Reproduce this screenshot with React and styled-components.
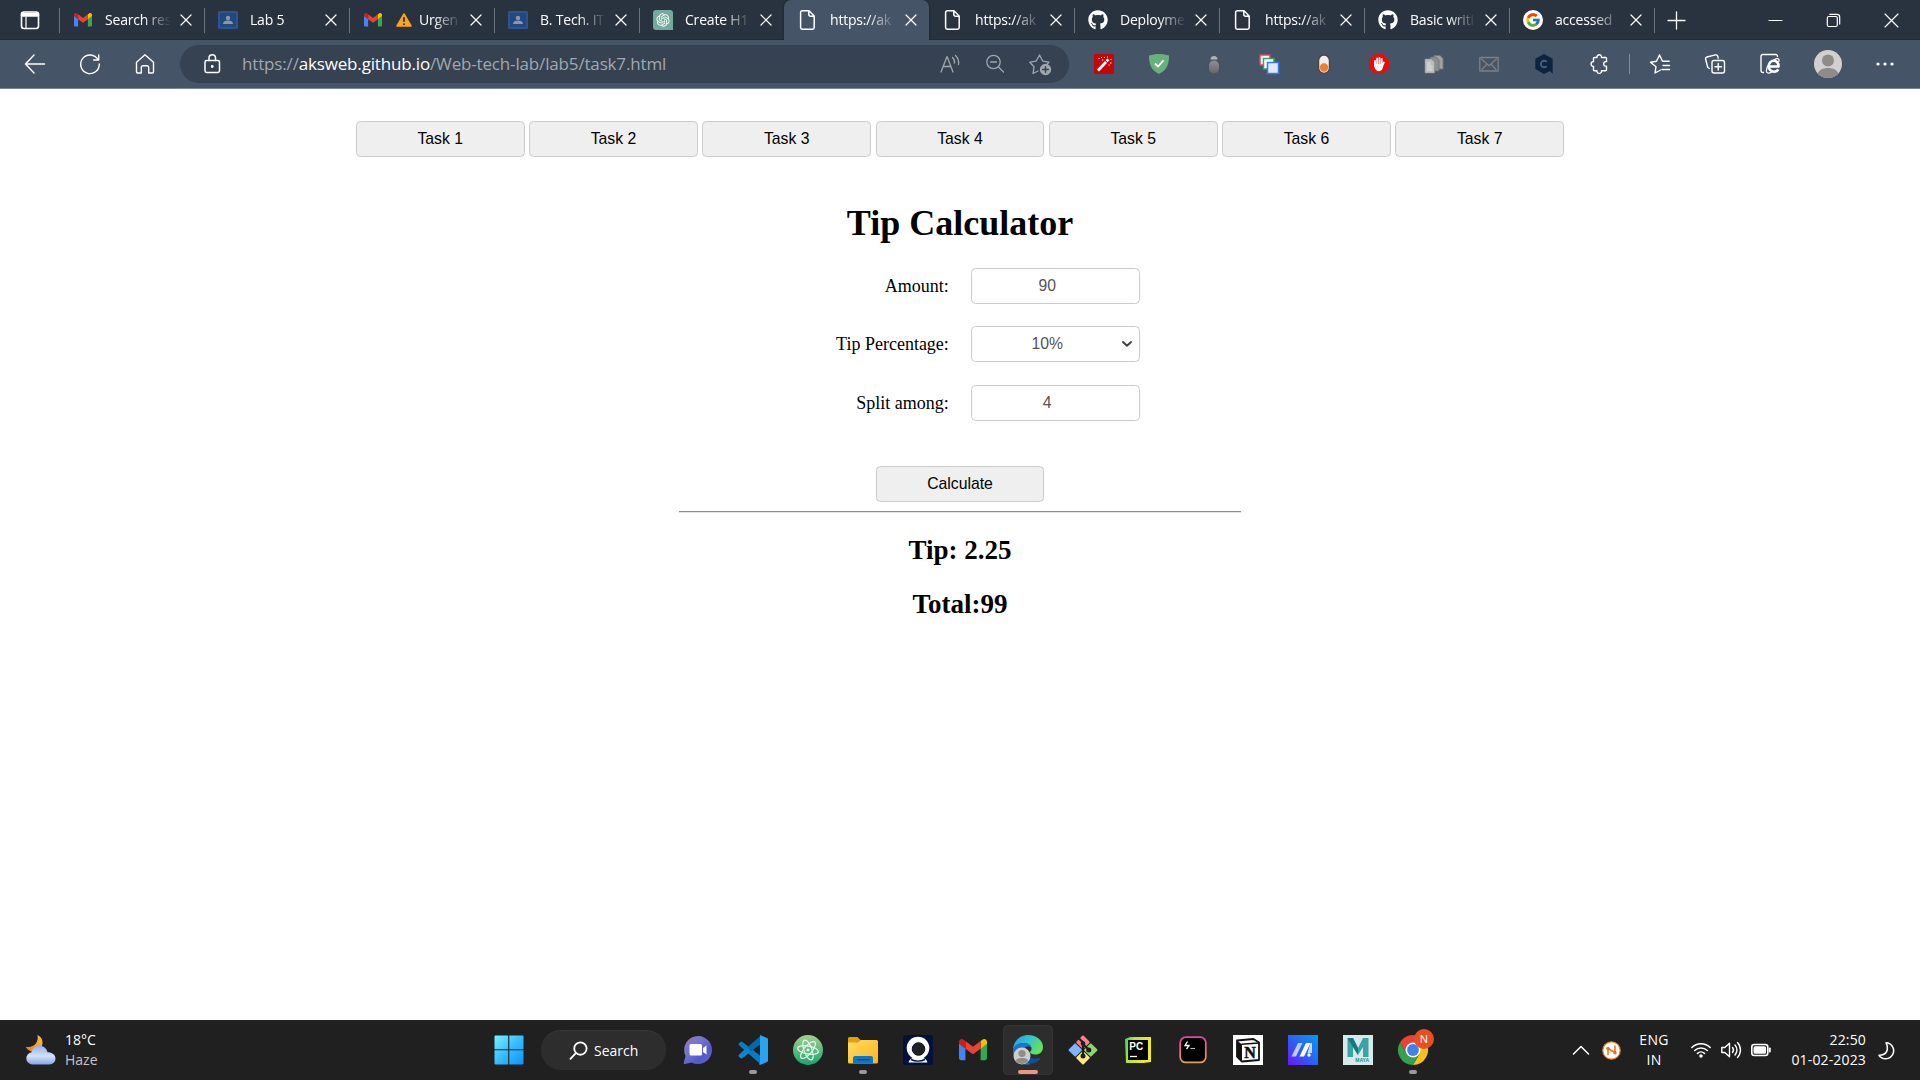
import React from "react";
import styled, { createGlobalStyle, css } from "styled-components";
import { FcGoogle } from "react-icons/fc";
import { FaGithub } from "react-icons/fa";
import { RiOpenaiFill } from "react-icons/ri";

const ui = `"Open Sans", "Noto Sans", sans-serif`;
const arial = `"Liberation Sans", Arial, sans-serif`;
const times = `"Liberation Serif", "Times New Roman", serif`;

const GlobalStyle = createGlobalStyle`
  *, *::before, *::after { box-sizing: border-box; }
  body { margin: 0; background: #fff; overflow: hidden; }
  svg { display: block; flex: none; overflow: visible; }
`;

const Screen = styled.div`
  width: 1920px;
  height: 1080px;
  display: flex;
  flex-direction: column;
  background: #fff;
`;

/* ---------- tab strip ---------- */

const TabStrip = styled.header`
  height: 40px;
  flex: none;
  display: flex;
  background: #29333f;
  box-shadow: inset 0 -1px 0 #222b36;
  font-family: ${ui};
`;

const StripButton = styled.div`
  width: ${(p) => p.$width}px;
  flex: none;
  display: flex;
  align-items: center;
  justify-content: center;
  color: #fff;
`;

const TabItem = styled.div`
  width: ${(p) => p.$width || 145}px;
  flex: none;
  height: 40px;
  display: flex;
  align-items: center;
  padding: 0 5px 0 14px;
  color: #fff;
  position: relative;
  ${(p) =>
    p.$divider &&
    css`
      &::before {
        content: "";
        position: absolute;
        left: 0;
        top: 8px;
        width: 1px;
        height: 25px;
        background: #6b737d;
      }
    `}
  ${(p) =>
    p.$active &&
    css`
      background: #465468;
      border-radius: 7px 7px 0 0;
      box-shadow: 0 0 3px rgba(0, 0, 0, 0.4);
      clip-path: inset(0 -4px 0 -4px);
    `}
`;

const TabIcon = styled.div`
  width: 20px;
  height: 20px;
  margin-right: 12px;
  display: flex;
  align-items: center;
  justify-content: center;
`;

const TabTitle = styled.div`
  width: 68px;
  height: 24px;
  display: flex;
  align-items: center;
  padding-bottom: 1px;
  white-space: pre;
  font-size: 14px;
  letter-spacing: -0.2px;
  mask-image: linear-gradient(90deg, #000 56%, transparent 97%);
`;

const TabClose = styled.div`
  margin-left: auto;
  width: 26px;
  display: flex;
  justify-content: center;
`;

const WindowControls = styled.div`
  margin-left: auto;
  display: flex;
`;

/* ---------- toolbar ---------- */

const Toolbar = styled.nav`
  height: 49px;
  flex: none;
  display: flex;
  align-items: center;
  background: #465468;
  border-bottom: 1px solid #7c8796;
  padding: 0 8px 0 7px;
  color: #fff;
  font-family: ${ui};
`;

const ToolSlot = styled.div`
  width: ${(p) => p.$width || 55}px;
  display: flex;
  align-items: center;
  justify-content: center;
`;

const AddressBar = styled.div`
  width: 889px;
  height: 38px;
  margin-left: 8px;
  margin-right: 7px;
  border-radius: 19px;
  background: #364152;
  display: flex;
  align-items: center;
  padding: 0 7px 0 22px;
`;

const Url = styled.div`
  margin-left: 20px;
  padding-bottom: 2px;
  flex: 1;
  white-space: nowrap;
  font-size: 17px;
  letter-spacing: -0.16px;
  color: #a2a8b0;
  b {
    font-weight: 400;
    color: #fff;
  }
`;

const ToolDivider = styled.div`
  width: 1px;
  height: 20px;
  margin: 0 2px 0 3px;
  background: #838d9b;
`;

const Avatar = styled.div`
  width: 28px;
  height: 28px;
  border-radius: 50%;
  overflow: hidden;
  background: #d2d0ce;
`;

/* ---------- page ---------- */

const Page = styled.main`
  flex: 1;
  display: flex;
  flex-direction: column;
  align-items: center;
  padding-top: 32px;
  color: #000;
  font-family: ${times};
`;

const TaskNav = styled.div`
  display: flex;
  gap: 4.5px;
`;

const Button = styled.button`
  width: 168.75px;
  height: 36px;
  padding: 0;
  border: 1px solid #ccc;
  border-radius: 4.5px;
  background: #efefef;
  color: #000;
  font: 15.75px ${arial};
`;

const Title = styled.h1`
  margin: 45px 0 0;
  font-size: 36px;
  line-height: 42px;
  font-weight: 700;
`;

const Form = styled.form`
  display: grid;
  grid-template-columns: 270px 168.75px;
  column-gap: 22.5px;
  row-gap: 22.5px;
  margin: 23.8px 0 45.2px;
  padding-right: 101px;
  align-items: center;
`;

const Label = styled.label`
  text-align: right;
  font-size: 18px;
  line-height: 20px;
  padding-bottom: 0.6px;
`;

const Field = styled.div`
  height: 36px;
  display: flex;
  align-items: center;
  justify-content: center;
  border: 1px solid #ccc;
  border-radius: 4.5px;
  background: #fff;
  color: #555;
  font: 15.75px ${arial};
`;

const FieldValue = styled.span`
  flex: 1;
  text-align: center;
`;

const FieldEnd = styled.span`
  width: 17px;
  display: flex;
`;

const Rule = styled.hr`
  width: 562.5px;
  height: 2px;
  margin: 9px 0 0;
  border: 0;
  border-top: 1px solid #8c8c8c;
  border-bottom: 1px solid #e6e6e6;
`;

const Result = styled.h2`
  margin: ${(p) => p.$top}px 0 0;
  font-size: 27px;
  line-height: 31px;
  font-weight: 700;
`;

/* ---------- taskbar ---------- */

const Taskbar = styled.footer`
  height: 60px;
  flex: none;
  display: flex;
  align-items: center;
  background: #202020;
  color: #fff;
  font-family: ${ui};
  font-size: 14px;
`;

const Weather = styled.div`
  width: 481px;
  padding-left: 25px;
  display: flex;
  align-items: center;
  gap: 9px;
  letter-spacing: -0.1px;
`;

const Lines = styled.div`
  display: flex;
  flex-direction: column;
  align-items: ${(p) => p.$align || "flex-start"};
  line-height: 20px;
  letter-spacing: ${(p) => p.$tracking || 0}px;
  span + span {
    color: ${(p) => p.$second || "#fff"};
  }
`;

const AppSlot = styled.div`
  width: 55px;
  height: 60px;
  display: flex;
  flex-direction: column;
  align-items: center;
  padding-top: 5px;
`;

const AppTile = styled.div`
  width: 50px;
  height: 50px;
  border-radius: 5px;
  display: flex;
  flex-direction: column;
  align-items: center;
  padding-top: 10px;
  gap: 5px;
  ${(p) =>
    p.$active &&
    css`
      background: #2d2d2d;
      box-shadow: inset 0 0 0 1px #353535;
    `}
`;

const Indicator = styled.div`
  width: ${(p) => (p.$active ? 20 : 8)}px;
  height: 4px;
  border-radius: 2px;
  background: ${(p) => (p.$active ? "#ee967d" : "#9a9a9a")};
`;

const SearchPill = styled.div`
  width: 125px;
  height: 40px;
  margin: 0 4px 0 5px;
  border-radius: 20px;
  background: #2d2d2d;
  box-shadow: inset 0 1px 0 #363636;
  display: flex;
  align-items: center;
  padding-left: 28px;
  gap: 6px;
`;

const Tray = styled.div`
  margin-left: auto;
  display: flex;
  align-items: center;
`;

const TraySlot = styled.div`
  width: ${(p) => p.$width}px;
  display: flex;
  justify-content: ${(p) => p.$justify || "center"};
  padding-left: ${(p) => p.$inset || 0}px;
  white-space: nowrap;
`;

/* ---------- drawings ---------- */

const Line = ({ size = 20, w = 1.3, color = "currentColor", children, box = 20 }) => (
  <svg width={size} height={size} viewBox={`0 0 ${box} ${box}`} fill="none" stroke={color} strokeWidth={w} strokeLinecap="round" strokeLinejoin="round">
    {children}
  </svg>
);

const GmailIcon = ({ width = 18 }) => (
  <svg width={width} height={width * 0.76} viewBox="0 0 28 21">
    <path d="M0 4v15.200a1.800 1.800 0 0 0 1.800 1.800H6.400V9z" fill="#4285f4" />
    <path d="M21.600 21h4.600a1.800 1.800 0 0 0 1.800-1.800V4l-6.400 5z" fill="#34a853" />
    <path d="M21.600 1.900V9.500L28 4.700V2.700C28 .3 25.200-.9 23.400.5z" fill="#fbbc04" />
    <path d="M6.400 9.500V1.900L14 7.600l7.600-5.700v7.600L14 15.200z" fill="#ea4335" />
    <path d="M0 2.700v2l6.400 4.800V1.900L4.600.5C2.800-.9 0 .3 0 2.700z" fill="#c5221f" />
  </svg>
);

const ClassroomIcon = () => (
  <svg width="20" height="18" viewBox="0 0 20 18">
    <rect width="20" height="18" rx="1.500" fill="#2f5293" />
    <rect x="2" y="2" width="16" height="14" fill="#23477f" />
    <circle cx="10" cy="7" r="2.200" fill="#8e979f" />
    <path d="M5 13c0-2.500 2-3.500 5-3.500s5 1 5 3.500z" fill="#8e979f" />
  </svg>
);

const ChatGptIcon = () => (
  <svg width="20" height="20" viewBox="0 0 20 20">
    <path d="M3 0h14a3 3 0 0 1 3 3v17H3a3 3 0 0 1-3-3V3a3 3 0 0 1 3-3z" fill="#74aa9c" />
    <RiOpenaiFill x="2" y="2" width="16" height="16" size={16} color="#fff" />
  </svg>
);

const FileIcon = () => (
  <Line w={1.500}>
    <path d="M4.300.8h6.700l5.200 5.200v11.500a1.700 1.700 0 0 1-1.700 1.700H4.300a1.700 1.700 0 0 1-1.700-1.700v-15A1.700 1.700 0 0 1 4.300.8zM10.800 1v3.500a1.700 1.700 0 0 0 1.700 1.700H16" />
  </Line>
);

const WarnBox = styled.span`
  margin-left: 1px;
  margin-right: 7px;
`;

const WarningIcon = () => (
  <WarnBox>
    <svg width="16" height="14" viewBox="0 0 16 14">
      <path d="M8 1l7 12H1z" fill="#fba31c" stroke="#fba31c" strokeWidth="1.500" strokeLinejoin="round" />
      <path d="M8 4.300v4.500M8 10.500v1.400" stroke="#222" strokeWidth="1.700" />
    </svg>
  </WarnBox>
);

const CloseIcon = ({ size = 10 }) => (
  <Line size={size} box={10} w={size > 12 ? 0.9 : 1.200}>
    <path d="M0 0l10 10M10 0L0 10" />
  </Line>
);

const MoonCloud = () => (
  <svg width="31" height="31" viewBox="0 0 31 31">
    <defs>
      <linearGradient id="moon" x1="0" y1="1" x2="1" y2="0">
        <stop offset="0" stopColor="#f0761c" />
        <stop offset="1" stopColor="#f8c33c" />
      </linearGradient>
      <linearGradient id="cloud" x1="0" y1="0" x2="0" y2="1">
        <stop offset="0" stopColor="#8fb0f0" />
        <stop offset=".55" stopColor="#d4e1fa" />
        <stop offset="1" stopColor="#84a5e8" />
      </linearGradient>
    </defs>
    <path d="M12.500 0c5 2 6.500 8.500 3.500 13s-8.500 5-12.500 2c-1.500-1-2.500-2.500-2.500-3.300 4 .8 7.500-.2 9.800-3.200 1.900-2.600 2.300-5.500 1.700-8.500z" fill="url(#moon)" />
    <path d="M7 29.500a6.200 6.200 0 0 1-.5-12.300c1-4 4.300-6.400 8-6.400 4 0 7 2.500 8 6.400 4.500 0 8 2.400 8 6.300a6 6 0 0 1-6 6z" fill="url(#cloud)" />
  </svg>
);

const WindowsLogo = () => (
  <svg width="30" height="30" viewBox="0 0 30 30">
    <defs>
      <linearGradient id="win" gradientUnits="userSpaceOnUse" x1="0" y1="0" x2="30" y2="30">
        <stop offset="0" stopColor="#7cf2ff" />
        <stop offset=".5" stopColor="#35bdff" />
        <stop offset="1" stopColor="#0d90f8" />
      </linearGradient>
    </defs>
    <path d="M.5 1.500a1 1 0 0 1 1-1h12.700v13.700H.5zM15.300.5h13.200a1 1 0 0 1 1 1v12.700H15.300zM.5 15.300h13.700v14.200H1.500a1 1 0 0 1-1-1zM15.300 15.300h14.200v13.200a1 1 0 0 1-1 1H15.300z" fill="url(#win)" />
  </svg>
);

const ChatIcon = () => (
  <svg width="30" height="30" viewBox="0 0 30 30">
    <defs>
      <linearGradient id="chat" x1="0" y1="0" x2="1" y2="1">
        <stop offset="0" stopColor="#a071ae" />
        <stop offset=".35" stopColor="#7477cf" />
        <stop offset=".7" stopColor="#5558c8" />
        <stop offset="1" stopColor="#5b6be0" />
      </linearGradient>
    </defs>
    <path d="M15 1a14 14 0 1 1-6.500 26.400L2 29a1 1 0 0 1-1.200-1.200L2.500 21A14 14 0 0 1 15 1z" fill="url(#chat)" />
    <rect x="6.500" y="9" width="12.500" height="11.500" rx="1.500" fill="#fff" />
    <path d="M20 13l3.500-2.500v9L20 17z" fill="#fff" />
  </svg>
);

const CodeIcon = () => (
  <svg width="30" height="30" viewBox="0 0 30 30">
    <path d="M1 10.200a1.300 1.300 0 0 1 0-1.900l1.500-1.300a1.600 1.600 0 0 1 2 0L22 20.500v8.300z" fill="#0a7cc4" />
    <path d="M1 19.800a1.300 1.300 0 0 0 0 1.900L2.500 23a1.600 1.600 0 0 0 2 0L22 9.500V1.200z" fill="#0369a8" />
    <path d="M1 19.800a1.300 1.300 0 0 0 0 1.900L2.500 23a1.600 1.600 0 0 0 2 0L13 16.500l-4-4z" fill="#0a86d2" />
    <path d="M22 0l7 3a1.600 1.600 0 0 1 1 1.500v21a1.600 1.600 0 0 1-1 1.500l-7 3-1-1 1-1V2z" fill="#27a5ee" />
  </svg>
);

const AtomIcon = () => (
  <svg width="30" height="30" viewBox="0 0 30 30">
    <defs>
      <linearGradient id="atom" x1="0" y1="0" x2="0" y2="1">
        <stop offset="0" stopColor="#a3d08b" />
        <stop offset="1" stopColor="#17a56f" />
      </linearGradient>
    </defs>
    <circle cx="15" cy="15" r="15" fill="url(#atom)" />
    <g fill="none" stroke="#e9f7ef" strokeWidth="1.200">
      <ellipse cx="15" cy="15" rx="10.500" ry="4" transform="rotate(10 15 15)" />
      <ellipse cx="15" cy="15" rx="10.500" ry="4" transform="rotate(70 15 15)" />
      <ellipse cx="15" cy="15" rx="10.500" ry="4" transform="rotate(130 15 15)" />
    </g>
    <circle cx="15" cy="15" r="1.600" fill="#fff" />
  </svg>
);

const FolderIcon = () => (
  <svg width="30" height="30" viewBox="0 0 30 30">
    <defs>
      <linearGradient id="folder" x1="0" y1="0" x2="1" y2="1">
        <stop offset="0" stopColor="#ffdc68" />
        <stop offset="1" stopColor="#fcb614" />
      </linearGradient>
    </defs>
    <path d="M0 8V3.500A1.500 1.500 0 0 1 1.500 2h8l3 3H24v5H0z" fill="#e0a00c" />
    <path d="M0 7.500h10L13 5h15.500A1.500 1.500 0 0 1 30 6.500v20.500a1.500 1.500 0 0 1-1.500 1.500h-27A1.500 1.500 0 0 1 0 27z" fill="url(#folder)" />
    <path d="M5 28.500V23a2 2 0 0 1 2-2h16a2 2 0 0 1 2 2v5.500z" fill="#0f77cb" />
    <path d="M9 24.700h12" stroke="#0a4c8c" strokeWidth="1.400" strokeLinecap="round" />
  </svg>
);

const RingIcon = () => (
  <svg width="30" height="30" viewBox="0 0 30 30">
    <rect width="30" height="30" rx="3" fill="#00123c" />
    <path d="M5.500 27.500c1-4 4-5 9.500-5s8.500 1 9.500 5z" fill="#fff" />
    <path d="M8 24.500c4 2 10 2 14 0" fill="none" stroke="#00123c" strokeWidth="1.500" />
    <circle cx="15" cy="13" r="11.300" fill="#fff" />
    <circle cx="15.500" cy="14" r="6.300" fill="#202020" stroke="#00123c" />
  </svg>
);

const EdgeIcon = () => (
  <svg width="30" height="30" viewBox="0 0 30 30">
    <defs>
      <linearGradient id="edgeA" x1="0" y1="0" x2="1" y2=".5">
        <stop offset="0" stopColor="#2596dc" />
        <stop offset=".5" stopColor="#31c2d4" />
        <stop offset="1" stopColor="#66e05e" />
      </linearGradient>
    </defs>
    <path d="M0 15C0 6.500 6.500 0 15 0c9 0 15 6 15 12 0 5-3.500 7.500-7.500 7.500-3.500 0-5.500-1.200-5.500-2.300 0-.8 1.500-1.200 1.500-3.700 0-3-3-5.500-7.500-5.500C5 8 1 11 0 15z" fill="url(#edgeA)" />
    <path d="M0 15C1 10 5.500 8 11 8c4.500 0 7.500 2.500 7.500 5.500-1-2-3-2.500-4.500-2-3 1-5 4-4.500 8 .5 5 4.500 8.500 8.500 9.500-9.500 3-18-4-18-14z" fill="#1478d2" />
    <path d="M10 17c-1 7 5 12 10 11.500 3.500-.7 6.500-3.500 8-6-4 1.500-12 3-18-5.500z" fill="#0c4f9e" />
    <circle cx="9" cy="21" r="8.500" fill="#cfcdcb" />
    <circle cx="9" cy="18.500" r="3.600" fill="#8f8c8a" />
    <path d="M3 26.500c0-3 3-3.500 6-3.500s6 .5 6 3.500a8.500 8.500 0 0 1-12 0z" fill="#8f8c8a" />
  </svg>
);

const GitIcon = () => (
  <svg width="30" height="30" viewBox="0 0 30 30">
    <g transform="rotate(45 15 15)">
      <rect x="4.500" y="4.500" width="10" height="10" rx="1" fill="#ff7f84" />
      <rect x="15.500" y="4.500" width="10" height="10" rx="1" fill="#8cd66b" />
      <rect x="4.500" y="15.500" width="10" height="10" rx="1" fill="#80b3ff" />
      <rect x="15.500" y="15.500" width="10" height="10" rx="1" fill="#ffe680" />
    </g>
    <path d="M11 3.500l4 4V21M15 9l6 6" stroke="#1f1c1c" strokeWidth="2.200" fill="none" />
    <circle cx="15" cy="8.500" r="2.300" fill="#1f1c1c" />
    <circle cx="15" cy="21" r="2.500" fill="#1f1c1c" />
    <circle cx="20.800" cy="15" r="2.500" fill="#1f1c1c" />
  </svg>
);

const PyCharmIcon = () => (
  <svg width="30" height="30" viewBox="0 0 30 30">
    <defs>
      <linearGradient id="pyc" x1="0" y1="0" x2="1" y2="0.300">
        <stop offset="0" stopColor="#1fd964" />
        <stop offset=".35" stopColor="#b9e52d" />
        <stop offset="1" stopColor="#f2ee1e" />
      </linearGradient>
    </defs>
    <path d="M2 4l5-2h21v25l-8 1H3z" fill="url(#pyc)" />
    <rect x="5" y="5" width="20" height="20" fill="#000" />
    <text x="6.300" y="15.300" fontFamily="Liberation Sans" fontWeight="700" fontSize="10" fill="#fff">PC</text>
    <path d="M7 21.500h7" stroke="#fff" strokeWidth="1.300" />
  </svg>
);

const TerminalIcon = () => (
  <svg width="30" height="30" viewBox="0 0 30 30">
    <defs>
      <linearGradient id="term" x1="0" y1="0" x2="0" y2="1">
        <stop offset="0" stopColor="#f23fa5" />
        <stop offset="1" stopColor="#e8a14c" />
      </linearGradient>
    </defs>
    <rect x="2.200" y="2.200" width="25.600" height="25.200" rx="5.500" fill="#000" stroke="url(#term)" strokeWidth="1.700" />
    <path d="M9.500 6.500L7 10.500h4L8.500 14" fill="none" stroke="#fff" strokeWidth="1.300" />
    <path d="M12.500 13.500h4.500" stroke="#bbb" strokeWidth="1.100" />
  </svg>
);

const NotionIcon = () => (
  <svg width="30" height="30" viewBox="0 0 30 30">
    <rect width="30" height="30" fill="#fff" />
    <path d="M4 5.500L20.500 4 26 7.500V25L9 26.500 4 21.500z" fill="#fff" stroke="#111" strokeWidth="1.800" strokeLinejoin="round" />
    <path d="M4 5.500l5 4V26.500l-5-5z" fill="#111" />
    <path d="M8.500 9.300L26 8" stroke="#111" strokeWidth="1.600" />
    <text x="11.300" y="22.800" fontFamily="Liberation Serif" fontWeight="700" fontSize="16" fill="#111" stroke="#111" strokeWidth=".5">N</text>
  </svg>
);

const SlashIcon = () => (
  <svg width="30" height="30" viewBox="0 0 30 30">
    <defs>
      <linearGradient id="slash" x1="0" y1="1" x2="1" y2="0">
        <stop offset="0" stopColor="#6a17f5" />
        <stop offset=".5" stopColor="#2b62f5" />
        <stop offset="1" stopColor="#009cfb" />
      </linearGradient>
    </defs>
    <rect width="30" height="30" fill="url(#slash)" />
    <path d="M10 8h4.500L8 21.500H3.500z" fill="#b9cdfb" />
    <path d="M18 8h4.500L16 21.500h-4.500z" fill="#fff" />
    <path d="M22.500 8h1.500v10h-4.500z" fill="#c9d8fd" />
    <circle cx="21" cy="20" r="1.700" fill="#fff" />
  </svg>
);

const MayaIcon = () => (
  <svg width="30" height="30" viewBox="0 0 30 30">
    <rect width="30" height="30" fill="#d8e9e9" />
    <path d="M4.500 22V3h5.500l5 10 5-10h5.500v19H20V12l-5 8-5-8v10z" fill="#37a5a5" />
    <path d="M4.500 3h5.500l5 10v7L10 12z" fill="#16797f" />
    <text x="12.300" y="27.300" fontFamily="Liberation Sans" fontWeight="700" fontSize="5" fill="#1a8e92">MAYA</text>
  </svg>
);

const ChromeIcon = () => (
  <svg width="30" height="30" viewBox="0 0 30 30">
    <path d="M2 7.500A15 15 0 0 1 28 7.500H15L8.500 18.800z" fill="#ea4335" />
    <path d="M28 7.500A15 15 0 0 1 15 30l6.500-11.200L15 7.500z" fill="#fbc116" />
    <path d="M15 30A15 15 0 0 1 2 7.500l6.500 11.300c3 4.500 9.500 4.500 13 0z" fill="#34a14f" />
    <circle cx="15" cy="15" r="7.500" fill="#fff" />
    <circle cx="15" cy="15" r="5.900" fill="#3f80ee" />
    <circle cx="26" cy="4" r="10" fill="#e8501f" />
    <text x="26" y="8" textAnchor="middle" fontFamily="Open Sans" fontSize="11" fill="#fff">N</text>
  </svg>
);

const WandIcon = () => (
  <svg width="20" height="20" viewBox="0 0 20 20">
    <rect width="20" height="20" rx="1" fill="#c40606" />
    <path d="M4 16.500L12 8" stroke="#fff" strokeWidth="2.800" />
    <path d="M12.600 7.300l1.800-1.900" stroke="#fff" strokeWidth="2.800" />
    <path d="M4.500 4.500h1.200M8 6h1.200M7 3.500h1M10 3.500h1M13 3h1M16.500 5.500h1M16 9h1.500M14.500 11h1" stroke="#fff" strokeWidth="1.200" />
  </svg>
);

const ShieldIcon = () => (
  <svg width="20" height="20" viewBox="0 0 20 20">
    <path d="M10 0c3.500 0 7 .6 10 1.600 0 8-1.500 14.500-10 18.400C1.500 16.100 0 9.600 0 1.600 3 .6 6.500 0 10 0z" fill="#67b279" />
    <path d="M6 9.500l3 3 5.500-6.200" fill="none" stroke="#fff" strokeWidth="1.800" />
  </svg>
);

const BugIcon = () => (
  <svg width="20" height="20" viewBox="0 0 20 20">
    <defs>
      <linearGradient id="bug" x1="0" y1="0" x2="0" y2="1">
        <stop offset="0" stopColor="#8f9093" />
        <stop offset="1" stopColor="#66676a" />
      </linearGradient>
    </defs>
    <path d="M1.500 8l4 1.500M1 13h4M2.500 18l3-2.500M18.500 8l-4 1.500M19 13h-4M17.500 18l-3-2.500" stroke="#4b4f56" strokeWidth="1" />
    <path d="M6.500 5.500a3.500 3.500 0 0 1 7 0z" fill="#b0b2b5" />
    <rect x="5" y="6.500" width="10" height="13" rx="5" fill="url(#bug)" />
  </svg>
);

const StackIcon = () => (
  <svg width="20" height="20" viewBox="0 0 20 20">
    <rect x="1" y="1" width="10" height="10" fill="#fff" stroke="#f0385f" strokeWidth="1.500" />
    <rect x="4.500" y="4.500" width="10.500" height="10.500" fill="#fff" stroke="#2ea85c" strokeWidth="1.500" />
    <rect x="8.500" y="8.500" width="11" height="11" fill="#dfeafe" stroke="#3579e6" strokeWidth="1.500" />
  </svg>
);

const PillIcon = () => (
  <svg width="20" height="20" viewBox="0 0 20 20">
    <rect x="4.500" y="1" width="11" height="18.500" rx="5.500" fill="#eee" stroke="#484848" strokeWidth="1.500" />
    <circle cx="10" cy="13.500" r="4.200" fill="#f47b2c" />
  </svg>
);

const HandIcon = () => (
  <svg width="20" height="20" viewBox="0 0 20 20">
    <path d="M6 0h8l6 6v8l-6 6H6l-6-6V6z" fill="#e50e0e" />
    <path d="M6 7v5M8.200 4.500V11M10.500 3.800V11M12.700 5v7M14.800 8.500L13 13" stroke="#fff" strokeWidth="1.800" strokeLinecap="round" />
    <path d="M5.200 10h9l-.7 4.500c-.7 2-2 2.700-3.800 2.700-2.700 0-4.500-2.700-4.500-7.200z" fill="#fff" />
  </svg>
);

const PapersIcon = () => (
  <svg width="20" height="20" viewBox="0 0 20 20">
    <path d="M10 1.500h6l3 3V15h-9z" fill="#a0a1a2" stroke="#74777a" strokeWidth=".8" />
    <path d="M6.500 3h5.500l3 3v11H6.500z" fill="#8b8d8f" stroke="#6d7073" strokeWidth=".8" />
    <path d="M1 5h6.500l3 3v11H1z" fill="#bcbcbc" stroke="#8d8f91" strokeWidth=".6" />
    <path d="M3 8h3.500v3h2v6H3z" fill="#cecece" />
  </svg>
);

const MailIcon = () => (
  <Line w={1.300} color="#7e7f80">
    <rect x=".8" y="3.500" width="18.400" height="13.500" />
    <path d="M2.500 5l7.500 6.800L17.500 5M3 15.500l4.500-5M17 15.500l-4.500-5" />
  </Line>
);

const HexIcon = () => (
  <svg width="20" height="20" viewBox="0 0 20 20">
    <path d="M10 0l8.700 4.800V20L16 17l-6 3-8.700-5V4.800z" fill="#0c2442" />
    <path d="M12.700 7.800a3.300 3.300 0 1 0 0 4.400" fill="none" stroke="#496080" strokeWidth="1.900" />
  </svg>
);

const PuzzleIcon = () => (
  <Line w={1.400}>
    <path d="M5.500 3.500H8a2.300 2.300 0 1 1 4.500 0h4a1 1 0 0 1 1 1V7.600a2.400 2.400 0 1 0 0 4.700v3.400a1 1 0 0 1-1 1H12.500a2.300 2.300 0 1 1-4.500 0H5.500a1 1 0 0 1-1-1V12.400a2.400 2.400 0 1 1 0-4.800V4.500a1 1 0 0 1 1-1z" />
  </Line>
);

const PersonShape = () => (
  <svg width="28" height="28" viewBox="0 0 28 28">
    <circle cx="14" cy="10.500" r="6" fill="#8e8b88" />
    <path d="M3.500 24c1.500-4 5-6 10.500-6s9 2 10.500 6A14 14 0 0 1 3.500 24z" fill="#8e8b88" />
  </svg>
);

/* ---------- data ---------- */

const tabs = [
  { icon: <GmailIcon />, title: "Search res", divider: true },
  { icon: <ClassroomIcon />, title: "Lab 5", divider: true },
  { icon: <GmailIcon />, title: "Urgen", warn: true, divider: true },
  { icon: <ClassroomIcon />, title: "B. Tech. IT", divider: true },
  { icon: <ChatGptIcon />, title: "Create H1", divider: true },
  { icon: <FileIcon />, title: "https://ak", active: true },
  { icon: <FileIcon />, title: "https://ak" },
  { icon: <FaGithub size={20} />, title: "Deployme", divider: true },
  { icon: <FileIcon />, title: "https://ak", divider: true },
  { icon: <FaGithub size={20} />, title: "Basic writi", divider: true },
  { icon: <FcGoogle size={16} />, title: "accessed", divider: true, disc: true },
];

const extensions = [WandIcon, ShieldIcon, BugIcon, StackIcon, PillIcon, HandIcon, PapersIcon, MailIcon, HexIcon, PuzzleIcon];

const apps = [
  { icon: <ChatIcon /> },
  { icon: <CodeIcon />, open: true },
  { icon: <AtomIcon /> },
  { icon: <FolderIcon />, open: true },
  { icon: <RingIcon /> },
  { icon: <GmailIcon width={28} /> },
  { icon: <EdgeIcon />, open: true, active: true },
  { icon: <GitIcon /> },
  { icon: <PyCharmIcon /> },
  { icon: <TerminalIcon /> },
  { icon: <NotionIcon /> },
  { icon: <SlashIcon /> },
  { icon: <MayaIcon /> },
  { icon: <ChromeIcon />, open: true },
];

const Disc = styled.div`
  width: 20px;
  height: 20px;
  border-radius: 50%;
  background: #fff;
  display: flex;
  align-items: center;
  justify-content: center;
`;

const IconBox = styled.div`
  width: 30px;
  height: 30px;
  display: flex;
  align-items: center;
  justify-content: center;
`;

const MagnifierIcon = () => (
  <Line size={19} box={20} w={1.900}>
    <circle cx="12" cy="8" r="6.500" />
    <path d="M7.200 12.700L1.500 18.700" />
  </Line>
);

function BrowserTabs() {
  return (
    <TabStrip>
      <StripButton $width={59}>
        <Line w={1.600}>
          <rect x="1.500" y="2" width="17" height="16.500" rx="2.500" />
          <path d="M2 4h16M2 5.500h16" strokeWidth="2.600" />
          <path d="M6 7v11" strokeWidth="1.200" />
        </Line>
      </StripButton>
      {tabs.map((t, i) => (
        <TabItem key={i} $active={t.active} $divider={t.divider}>
          <TabIcon>{t.disc ? <Disc>{t.icon}</Disc> : t.icon}</TabIcon>
          <TabTitle>
            {t.warn && <WarningIcon />}
            {t.title}
          </TabTitle>
          <TabClose><CloseIcon /></TabClose>
        </TabItem>
      ))}
      <TabItem $divider $width={60}>
        <Line size={17} box={17} w={1.300}><path d="M8.500 0v17M0 8.500h17" /></Line>
      </TabItem>
      <WindowControls>
        <StripButton $width={57}><Line size={13} box={13} w={1.200}><path d="M0 6.500h13" /></Line></StripButton>
        <StripButton $width={58}>
          <Line size={13} box={13} w={1.200}>
            <rect x=".3" y="2.500" width="10" height="10" rx="1.500" />
            <path d="M2.800.4h7.200a2.700 2.700 0 0 1 2.700 2.700v7" />
          </Line>
        </StripButton>
        <StripButton $width={58}><CloseIcon size={13} /></StripButton>
      </WindowControls>
    </TabStrip>
  );
}

function BrowserToolbar() {
  return (
    <Toolbar>
      <ToolSlot><Line w={1.400}><path d="M19.500 10H.5M9 1L.5 10 9 19" /></Line></ToolSlot>
      <ToolSlot><Line w={1.400}><path d="M18 5.500A9.300 9.300 0 1 0 19.300 10M18.700 1v5h-5" /></Line></ToolSlot>
      <ToolSlot>
        <Line w={1.400}>
          <path d="M1.500 8.200L10 .8l8.500 7.400v9.600a1.200 1.200 0 0 1-1.200 1.200h-3.600v-5.500a1.700 1.700 0 0 0-1.700-1.700h-4a1.700 1.700 0 0 0-1.700 1.700V19H2.700a1.200 1.200 0 0 1-1.200-1.200z" />
        </Line>
      </ToolSlot>
      <AddressBar>
        <Line w={1.500}>
          <rect x="3" y="6.500" width="14.500" height="12" rx="1.700" />
          <path d="M7 6.500V4a3.200 3.200 0 0 1 6.500 0v2.500" />
          <circle cx="10.200" cy="12.500" r=".7" fill="currentColor" />
        </Line>
        <Url>https://<b>aksweb.github.io</b>/Web-tech-lab/lab5/task7.html</Url>
        <ToolSlot $width={45}>
          <Line w={1.300} color="#a0a6ae">
            <path d="M1 18L7 2.500 13 18M3.200 12.500h7.600M12.500 3.500c1.700 1.500 2.300 3.500 2 5.500M15.500 1.500c2.600 2.500 3.600 5.500 3 9" />
          </Line>
        </ToolSlot>
        <ToolSlot $width={45}>
          <Line w={1.300} color="#a0a6ae">
            <circle cx="8.500" cy="8" r="6.700" />
            <path d="M13.500 13l5 5M5.500 8h6" />
          </Line>
        </ToolSlot>
        <ToolSlot $width={45}>
          <Line size={22} box={22} w={1.300} color="#a0a6ae">
            <path d="M9 18L4 20.500l1-6.700L.8 9.200l6.200-1L10.500 2l3.300 6.200 6.200 1-2 2" />
            <circle cx="16.500" cy="16.500" r="5" fill="#a0a6ae" />
            <path d="M16.500 13.700v5.600M13.700 16.500h5.600" stroke="#364152" strokeWidth="1.500" />
          </Line>
        </ToolSlot>
      </AddressBar>
      {extensions.map((Icon, i) => (
        <ToolSlot key={i}><Icon /></ToolSlot>
      ))}
      <ToolDivider />
      <ToolSlot>
        <Line w={1.400}>
          <path d="M10.500 16L5 19l1-6.300L.5 8.200l6-.9L9.500 1l3 6.300h6.700M13 11.500h6.500M12 15.500h7.500" />
        </Line>
      </ToolSlot>
      <ToolSlot>
        <Line w={1.400}>
          <rect x="7" y="6.500" width="12.500" height="12.500" rx="2" />
          <path d="M13.200 9.500v6.500M10 12.700h6.500M4.500 14.500L2.800 13.500.6 5.200a1.800 1.800 0 0 1 1.300-2.200L10.500.9a1.800 1.800 0 0 1 2.200 1.300l.5 2" />
        </Line>
      </ToolSlot>
      <ToolSlot>
        <Line w={1.400}>
          <path d="M3.500 18.500H3a2 2 0 0 1-2-2V2.500a2 2 0 0 1 2-2h12.500a2 2 0 0 1 2 2" />
          <path d="M9.500 12.500h9c.2-3.500-1.800-5.700-4.700-5.700-3 0-5 2.400-5 5.500s2.100 5.400 5.200 5.400c1.900 0 3.500-.8 4.300-2.300" strokeWidth="2.600" strokeLinecap="butt" />
          <path d="M6.300 17c.2 2.600 3 2.600 5 1.300M6.300 17C6.500 11.500 12 5.800 16.500 4.700c2.200-.4 3 .6 2.300 2.800" strokeWidth="1.200" />
        </Line>
      </ToolSlot>
      <ToolSlot $width={61}><Avatar><PersonShape /></Avatar></ToolSlot>
      <ToolSlot $width={53}>
        <svg width="18" height="4" viewBox="0 0 18 4" fill="#fff">
          <circle cx="2" cy="2" r="1.600" /><circle cx="9" cy="2" r="1.600" /><circle cx="16" cy="2" r="1.600" />
        </svg>
      </ToolSlot>
    </Toolbar>
  );
}

function TipCalculator() {
  return (
    <Page>
      <TaskNav>
        {[1, 2, 3, 4, 5, 6, 7].map((n) => (
          <Button key={n}>Task {n}</Button>
        ))}
      </TaskNav>
      <Title>Tip Calculator</Title>
      <Form>
        <Label>Amount:</Label>
        <Field><FieldValue>90</FieldValue><FieldEnd /></Field>
        <Label>Tip Percentage:</Label>
        <Field>
          <FieldValue>10%</FieldValue>
          <FieldEnd>
            <Line size={10} box={10} w={2} color="#444"><path d="M1 3l4 3.700 4-3.700" /></Line>
          </FieldEnd>
        </Field>
        <Label>Split among:</Label>
        <Field><FieldValue>4</FieldValue><FieldEnd /></Field>
      </Form>
      <Button>Calculate</Button>
      <Rule />
      <Result $top={22}>Tip: 2.25</Result>
      <Result $top={23}>Total:99</Result>
    </Page>
  );
}

function WindowsTaskbar() {
  return (
    <Taskbar>
      <Weather>
        <MoonCloud />
        <Lines $second="#c4c4c4"><span>18°C</span><span>Haze</span></Lines>
      </Weather>
      <AppSlot><AppTile><WindowsLogo /></AppTile></AppSlot>
      <SearchPill><MagnifierIcon />Search</SearchPill>
      {apps.map((a, i) => (
        <AppSlot key={i}>
          <AppTile $active={a.active}>
            <IconBox>{a.icon}</IconBox>
            {a.open && <Indicator $active={a.active} />}
          </AppTile>
        </AppSlot>
      ))}
      <Tray>
        <TraySlot $width={30}>
          <Line size={16} box={16} w={1.500}><path d="M.5 12L8 4.500l7.500 7.500" /></Line>
        </TraySlot>
        <TraySlot $width={30}>
          <svg width="19" height="19" viewBox="0 0 19 19">
            <circle cx="9.500" cy="9.500" r="8.700" fill="#fff" stroke="#f47b2c" strokeWidth="1.200" />
            <path d="M6 14V7.500l7 4V4.500" fill="none" stroke="#f26a14" strokeWidth="1.500" />
            <circle cx="6" cy="7.500" r="1.700" fill="#f26a14" />
            <circle cx="13" cy="11.700" r="1.700" fill="#f26a14" />
          </svg>
        </TraySlot>
        <TraySlot $width={56}><Lines $align="center" $tracking={0.3}><span>ENG</span><span>IN</span></Lines></TraySlot>
        <TraySlot $width={38}>
          <Line size={20} w={1.500}>
            <path d="M.8 7.500a13 13 0 0 1 18.400 0M3.700 10.500a9 9 0 0 1 12.600 0M6.500 13.400a5 5 0 0 1 7 0" />
            <circle cx="10" cy="16" r="1" fill="currentColor" />
          </Line>
        </TraySlot>
        <TraySlot $width={22}>
          <Line size={20} w={1.400}>
            <path d="M.8 7.500v5h3l4.700 4.300V3.200L3.800 7.500zM11.500 7.500a4 4 0 0 1 0 5M14 5a7.500 7.500 0 0 1 0 10M16.500 2.500a11 11 0 0 1 0 15" />
          </Line>
        </TraySlot>
        <TraySlot $width={38}>
          <Line size={20} w={1.600}>
            <rect x=".8" y="4.500" width="16" height="11" rx="2.500" />
            <rect x="3.300" y="7" width="11" height="6" rx=".8" fill="currentColor" />
            <path d="M18.800 8.500v3" strokeWidth="2" />
          </Line>
        </TraySlot>
        <TraySlot $width={86} $justify="flex-end"><Lines $align="flex-end" $tracking={0.15}><span>22:50</span><span>01-02-2023</span></Lines></TraySlot>
        <TraySlot $width={54} $inset={12} $justify="flex-start">
          <Line size={17} box={17} w={1.500}>
            <path d="M8 .8A8 8 0 1 1 1 13.300c4.200 0 6.500-1.300 7.700-3.900C9.900 6.700 9.600 3.800 8 .8z" />
          </Line>
        </TraySlot>
      </Tray>
    </Taskbar>
  );
}

export default function App() {
  return (
    <>
      <GlobalStyle />
      <Screen>
        <BrowserTabs />
        <BrowserToolbar />
        <TipCalculator />
        <WindowsTaskbar />
      </Screen>
    </>
  );
}
